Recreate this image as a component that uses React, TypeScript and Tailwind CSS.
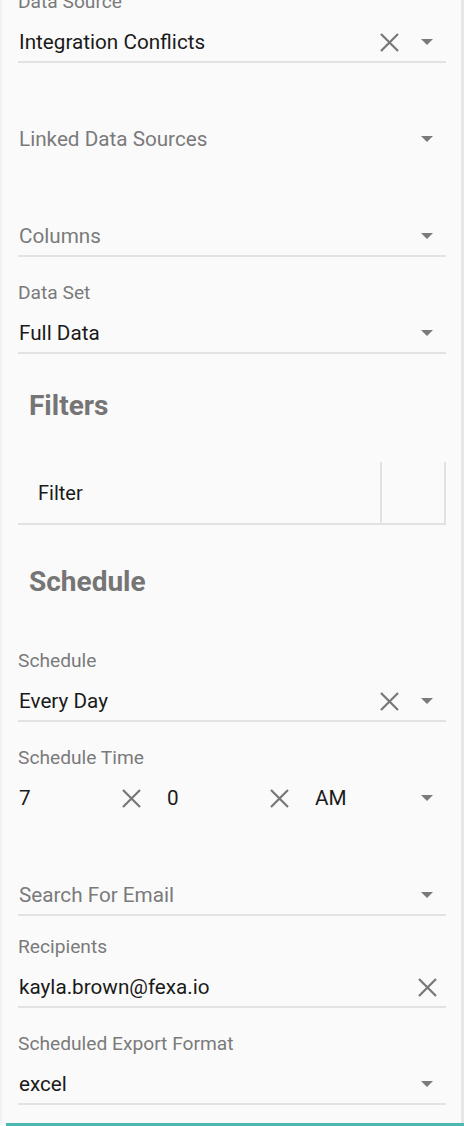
import React from "react";

function ClearIcon() {
  return (
    <svg width="19" height="19" viewBox="0 0 19 19">
      <path d="M1 1L18 18M18 1L1 18" stroke="#767676" strokeWidth="2.2" />
    </svg>
  );
}

function ArrowIcon() {
  return (
    <svg width="12" height="6" viewBox="0 0 12 6">
      <path d="M0 0h12L6 6z" fill="#7a7a7a" />
    </svg>
  );
}

interface FieldProps {
  label?: string;
  value?: string;
  placeholder?: string;
  clear?: boolean;
  arrow?: boolean;
  line?: boolean;
  top?: string;
}

function Label({ text }: { text?: string }) {
  return <div className="h-[20px] pt-[2px] mb-[13px] text-[19.2px] leading-[20px] text-[#7a7a7a]">{text}</div>;
}

function Field({ label, value, placeholder, clear, arrow, line = true, top = "pt-6" }: FieldProps) {
  return (
    <div className={top}>
      <Label text={label} />
      <div
        className={`flex items-center h-[40px] border-b-2 ${line ? "border-[#e2e2e2]" : "border-transparent"}`}
      >
        <div className="flex-1 pl-px text-[20.7px] leading-[24px] truncate">
          {value ? (
            <span className="text-[#1a1a1a]">{value}</span>
          ) : (
            <span className="text-[#7a7a7a]">{placeholder}</span>
          )}
        </div>
        {clear && (
          <div className="w-[38px] flex justify-center">
            <ClearIcon />
          </div>
        )}
        {arrow && (
          <div className="w-[38px] flex justify-center">
            <ArrowIcon />
          </div>
        )}
      </div>
    </div>
  );
}

function TimeCell({ value, arrow }: { value: string; arrow?: boolean }) {
  return (
    <div className="flex items-center h-[38px]">
      <div className="flex-1 pl-px text-[20.7px] leading-[24px] text-[#1a1a1a]">{value}</div>
      <div className="w-[38px] flex justify-center">{arrow ? <ArrowIcon /> : <ClearIcon />}</div>
    </div>
  );
}

export default function App() {
  return (
    <div className="min-h-screen bg-[#fafafa] font-['Roboto',sans-serif] overflow-hidden">
      <div className="border-l-2 border-l-[#f1f1f1] border-r-[3px] border-r-[#e6e6e6] pl-[16px] pr-[15px] pb-[18px]">
        <div className="-mt-[34px]">
          <Field label="Data Source" value="Integration Conflicts" clear arrow />
          <Field placeholder="Linked Data Sources" arrow line={false} />
          <Field placeholder="Columns" arrow />
          <Field label="Data Set" value="Full Data" arrow />
        </div>

        {/* Filters */}
        <h2 className="mt-[34px] h-[36px] pl-[11px] text-[28px] leading-[36px] font-bold text-[#757575]">Filters</h2>
        <div className="mt-[38px] flex h-[63px] border-b-2 border-[#e2e2e2]">
          <div className="flex-1 flex items-center pl-[20px] text-[20px] text-[#1a1a1a] border-r-2 border-[#e2e2e2]">
            Filter
          </div>
          <div className="w-[64px] border-r-2 border-[#e2e2e2]" />
        </div>

        {/* Schedule */}
        <h2 className="mt-[39px] mb-[25px] h-[36px] pl-[11px] text-[28px] leading-[36px] font-bold text-[#757575]">
          Schedule
        </h2>
        <Field label="Schedule" value="Every Day" clear arrow />
        <div className="pt-6">
          <Label text="Schedule Time" />
          <div className="grid grid-cols-3 gap-4 pb-[2px]">
            <TimeCell value="7" />
            <TimeCell value="0" />
            <TimeCell value="AM" arrow />
          </div>
        </div>
        <Field placeholder="Search For Email" arrow />
        <Field label="Recipients" value="kayla.brown@fexa.io" clear top="pt-[19px]" />
        <Field label="Scheduled Export Format" value="excel" arrow />
      </div>
      <div className="ml-[6px] h-[40px] border-t-[3px] border-[#4db6ae]" />
    </div>
  );
}
